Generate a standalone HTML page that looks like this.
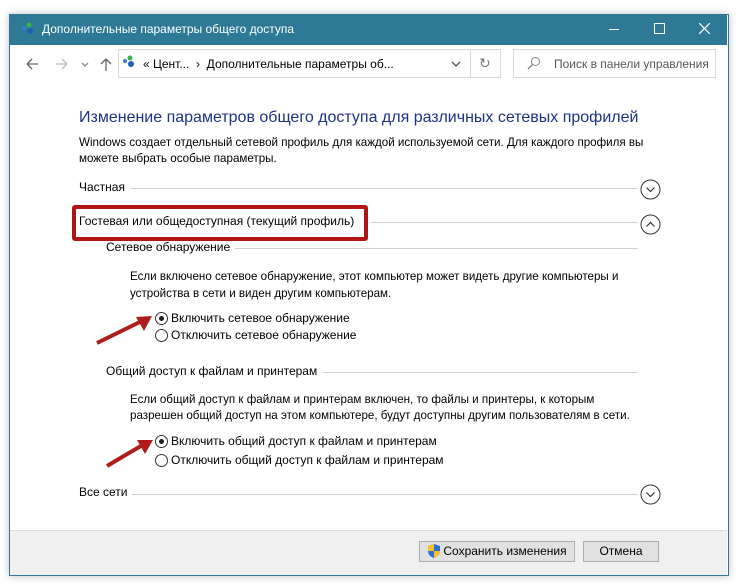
<!DOCTYPE html>
<html><head><meta charset="utf-8"><style>
body{margin:0;width:739px;height:585px;background:#fff;position:relative;overflow:hidden;font-family:"Liberation Sans",sans-serif;font-size:12px;color:#000}
.a{position:absolute;white-space:nowrap}
.win{position:absolute;left:9px;top:14px;width:718px;height:560px;border:1px solid #2e7a96;box-shadow:0 0 8px rgba(0,0,0,.25);background:#fff}
.ln{position:absolute;height:1px;background:#d0d0d0}
.rad{position:absolute;width:13px;height:13px;border:1px solid #333;border-radius:50%;box-sizing:border-box;background:#fff}
.btn{position:absolute;height:21px;background:#e1e1e1;border:1px solid #adadad;box-sizing:border-box;text-align:center;line-height:19px}
</style></head><body>
<div class="win"></div>
<div class="a" style="left:10px;top:15px;width:717px;height:30px;background:#2e7a96"></div>
<svg class="a" style="left:21px;top:22px" width="16" height="14"><circle cx="3" cy="6" r="2" fill="#3a7bd5"/><circle cx="8" cy="3" r="2.5" fill="#39b54a"/><circle cx="9" cy="9" r="3" fill="#1e5fb4"/></svg>
<div class="a" style="left:42px;top:22px;color:#fff;font-size:12px">Дополнительные параметры общего доступа</div>
<div class="a" style="left:609px;top:29px;width:10px;height:1px;background:#fff"></div>
<div class="a" style="left:654px;top:23px;width:9px;height:9px;border:1px solid #fff"></div>
<svg class="a" style="left:699px;top:23px" width="11" height="11"><path d="M0 0L11 11M11 0L0 11" stroke="#fff" stroke-width="1.2"/></svg>
<svg class="a" style="left:24px;top:55px" width="100" height="18" stroke-width="1.3" fill="none"><path d="M3 9h11M3 9l5-5M3 9l5 5" stroke="#666"/><path d="M32 9h11M43 9l-5-5M43 9l-5 5" stroke="#bbb"/><path d="M58 8l3 3 3-3" stroke="#888"/><path d="M82 4v12M82 4l-5 5M82 4l5 5" stroke="#666"/></svg>
<div class="a" style="left:118px;top:49px;width:383px;height:29px;border:1px solid #d9d9d9;box-sizing:border-box"></div>
<div class="a" style="left:470px;top:49px;width:1px;height:29px;background:#d9d9d9"></div>
<svg class="a" style="left:122px;top:55px" width="16" height="14"><circle cx="3" cy="6" r="2" fill="#3a7bd5"/><circle cx="8" cy="3" r="2.5" fill="#39b54a"/><circle cx="9" cy="9" r="3" fill="#1e5fb4"/></svg>
<div class="a" style="left:143px;top:57px">« Цент... &nbsp;› &nbsp;Дополнительные параметры об...</div>
<svg class="a" style="left:451px;top:61px" width="10" height="6"><path d="M1 1l4 4 4-4" stroke="#555" fill="none" stroke-width="1.3"/></svg>
<div class="a" style="left:479px;top:55px;color:#777;font-size:14px">↻</div>
<div class="a" style="left:513px;top:49px;width:203px;height:29px;border:1px solid #d9d9d9;box-sizing:border-box"></div>
<svg class="a" style="left:527px;top:56px" width="14" height="14"><circle cx="8.5" cy="5.5" r="4" stroke="#888" fill="none"/><path d="M5.5 8.5L1 13" stroke="#888" stroke-width="1.3"/></svg>
<div class="a" style="left:554px;top:57px;color:#555">Поиск в панели управления</div>

<div class="a" style="left:79px;top:109px;font-size:16px;color:#1e3287">Изменение параметров общего доступа для различных сетевых профилей</div>
<div class="a" style="left:79px;top:136px;font-size:11.6px">Windows создает отдельный сетевой профиль для каждой используемой сети. Для каждого профиля вы</div>
<div class="a" style="left:79px;top:152px;font-size:11.6px">можете выбрать особые параметры.</div>

<div class="a" style="left:79px;top:180px">Частная</div><div class="ln" style="left:130px;top:188px;width:508px"></div>
<svg class="a" style="left:640px;top:179px" width="21" height="21"><circle cx="10.5" cy="10.5" r="9.5" stroke="#333" fill="none"/><path d="M6.5 8.5l4 4 4-4" stroke="#333" fill="none" stroke-width="1.2"/></svg>
<div class="a" style="left:72px;top:205px;width:296px;height:36px;border:4px solid #b01515;border-radius:3px;box-sizing:border-box"></div>
<div class="a" style="left:79px;top:214px">Гостевая или общедоступная (текущий профиль)</div><div class="ln" style="left:370px;top:222px;width:268px"></div>
<svg class="a" style="left:640px;top:214px" width="21" height="21"><circle cx="10.5" cy="10.5" r="9.5" stroke="#333" fill="none"/><path d="M6.5 12.5l4-4 4 4" stroke="#333" fill="none" stroke-width="1.2"/></svg>
<div class="a" style="left:106px;top:240px">Сетевое обнаружение</div><div class="ln" style="left:235px;top:248px;width:403px"></div>
<div class="a" style="left:130px;top:270px;font-size:11.6px">Если включено сетевое обнаружение, этот компьютер может видеть другие компьютеры и</div>
<div class="a" style="left:130px;top:287px;font-size:11.6px">устройства в сети и виден другим компьютерам.</div>
<div class="rad" style="left:155px;top:312px"></div><div class="a" style="left:159px;top:316px;width:5px;height:5px;border-radius:50%;background:#222"></div>
<div class="a" style="left:171px;top:311px">Включить сетевое обнаружение</div>
<div class="rad" style="left:155px;top:329px"></div>
<div class="a" style="left:171px;top:328px">Отключить сетевое обнаружение</div>
<div class="a" style="left:106px;top:364px">Общий доступ к файлам и принтерам</div><div class="ln" style="left:323px;top:372px;width:315px"></div>
<div class="a" style="left:130px;top:393px;font-size:11.6px">Если общий доступ к файлам и принтерам включен, то файлы и принтеры, к которым</div>
<div class="a" style="left:130px;top:409px;font-size:11.6px">разрешен общий доступ на этом компьютере, будут доступны другим пользователям в сети.</div>
<div class="rad" style="left:155px;top:435px"></div><div class="a" style="left:159px;top:439px;width:5px;height:5px;border-radius:50%;background:#222"></div>
<div class="a" style="left:171px;top:434px">Включить общий доступ к файлам и принтерам</div>
<div class="rad" style="left:155px;top:454px"></div>
<div class="a" style="left:171px;top:453px">Отключить общий доступ к файлам и принтерам</div>
<div class="a" style="left:79px;top:485px">Все сети</div><div class="ln" style="left:132px;top:494px;width:506px"></div>
<svg class="a" style="left:640px;top:484px" width="21" height="21"><circle cx="10.5" cy="10.5" r="9.5" stroke="#333" fill="none"/><path d="M6.5 8.5l4 4 4-4" stroke="#333" fill="none" stroke-width="1.2"/></svg>
<svg class="a" style="left:90px;top:305px" width="70" height="170"><path d="M7 38L56 14" stroke="#b01c1c" stroke-width="4"/><path d="M62 11L46 12L54 26Z" fill="#b01c1c"/><path d="M17 161L56 138" stroke="#b01c1c" stroke-width="4"/><path d="M63 135L47 135L55 149Z" fill="#b01c1c"/></svg>
<div class="a" style="left:10px;top:530px;width:717px;height:44px;background:#f0f0f0;border-top:1px solid #dcdcdc"></div>
<div class="btn" style="left:419px;top:541px;width:156px"><span style="padding-left:16px">Сохранить изменения</span></div>
<svg class="a" style="left:427px;top:543px" width="14" height="16"><path d="M7 1L13 3V8C13 12 10 14 7 15C4 14 1 12 1 8V3Z" fill="#2a6fd1"/><path d="M7 1V8H13C13 12 10 14 7 15V8H1V3Z" fill="#f5c12e"/></svg>
<div class="btn" style="left:583px;top:541px;width:76px">Отмена</div>
</body></html>
